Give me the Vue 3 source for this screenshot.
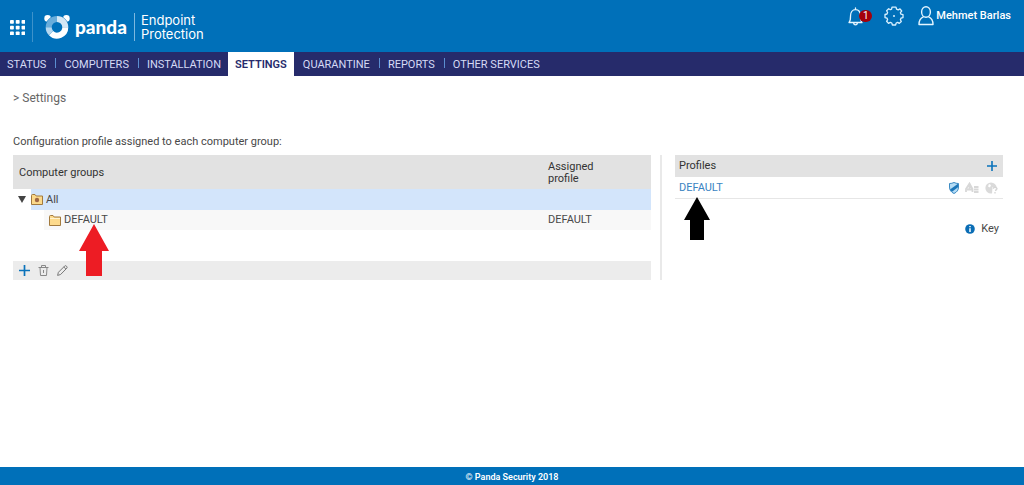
<script setup>
const tabs = [
  { label: 'STATUS' },
  { label: 'COMPUTERS', divided: true },
  { label: 'INSTALLATION', divided: true },
  { label: 'SETTINGS', active: true },
  { label: 'QUARANTINE' },
  { label: 'REPORTS', divided: true },
  { label: 'OTHER SERVICES', divided: true },
]
const dots = [0, 6, 12]
</script>

<template>
  <div class="page">
    <header class="top">
      <button class="plain apps" aria-label="Applications">
        <svg width="15" height="15" viewBox="0 0 15.6 15.6" fill="#fff">
          <template v-for="y in dots" :key="y">
            <rect v-for="x in dots" :key="x" :x="x" :y="y" width="4" height="4" rx="0.8" />
          </template>
        </svg>
      </button>
      <a class="brand" href="#" aria-label="Panda Endpoint Protection">
        <svg width="26" height="24" viewBox="0 0 26 24">
          <circle cx="3.6" cy="3.4" r="3.3" fill="#fff" />
          <circle cx="22.4" cy="3.4" r="3.3" fill="#fff" />
          <circle cx="13" cy="12.2" r="11.6" fill="#0070b9" />
          <g fill="none" stroke-width="6">
            <path d="M4.7 12.2A8.3 8.3 0 0 1 13 3.9" stroke="#69addb" />
            <path d="M13 3.9A8.3 8.3 0 0 1 21.3 12.2" stroke="#d4e8f6" />
            <path d="M21.3 12.2A8.3 8.3 0 0 1 7.1 18.1" stroke="#fff" />
            <path d="M7.1 18.1A8.3 8.3 0 0 1 4.700 12.2" stroke="#b4d7ef" />
          </g>
        </svg>
        <span class="name">panda</span>
        <span class="product">Endpoint<br />Protection</span>
      </a>
      <div class="tools">
        <button class="plain bell" aria-label="Notifications: 1">
          <svg width="16" height="19" viewBox="0 0 16 19" fill="none" stroke="#e4f5ff" stroke-width="1.3" stroke-linejoin="round" stroke-linecap="round">
            <path d="M1 15.500C2.600 14 2.500 12.500 2.500 9C2.500 5 4.500 2.600 7.500 2.600S12.500 5 12.500 9C12.500 12.500 12.500 14 14 15.500ZM5.500 15.800C6 18.500 9 18.500 9.500 15.800M7.500 2.500V1" />
          </svg>
          <span class="badge">1</span>
        </button>
        <button class="plain gear" aria-label="Preferences">
          <svg width="20" height="20" viewBox="0 0 20 20" fill="none" stroke="#d9f1ff" stroke-width="1.3" stroke-linejoin="round">
            <path d="M8 1.200H12L12.600 3.200L14.200 3.900L16 2.900L17.700 5L16.400 6.700L17 8.200L19 8.600V11.600L17 12.200L16.400 13.700L17.300 15.500L15.300 17.400L13.600 16.400L12.200 17L11.600 19H8.400L7.800 17L6.300 16.400L4.500 17.300L2.600 15.300L3.600 13.700L3 12.100L1 11.600V8.500L3 8L3.600 6.500L2.600 4.700L4.700 2.700L6.400 3.700L7.600 3.200Z" />
            <circle cx="10" cy="10" r="1" fill="#d9f1ff" stroke="none" />
          </svg>
        </button>
        <button class="plain user">
          <svg width="16" height="20" viewBox="0 0 16 20" fill="none" stroke="#e4f5ff" stroke-width="1.4" stroke-linejoin="round">
            <ellipse cx="8" cy="6" rx="4.400" ry="5.200" />
            <path d="M5.500 10.800C2.500 11.800 1 13.500 1 18.500H15C15 13.500 13.500 11.800 10.500 10.800" />
          </svg>
          <span>Mehmet Barlas</span>
        </button>
      </div>
    </header>

    <nav class="tabs">
      <a v-for="t in tabs" :key="t.label" href="#" :class="{ active: t.active, divided: t.divided }">{{ t.label }}</a>
    </nav>

    <main class="content">
      <p class="crumb">&gt; Settings</p>
      <p class="intro">Configuration profile assigned to each computer group:</p>
      <div class="panels">
        <section class="groups">
          <table>
            <thead>
              <tr>
                <th>Computer groups</th>
                <th class="assigned">Assigned<br />profile</th>
              </tr>
            </thead>
            <tbody>
              <tr class="root">
                <td>
                  <div class="node">
                    <button class="plain toggle" aria-label="Collapse All">
                      <svg width="8" height="7" viewBox="0 0 8 7"><path d="M0 0H8L4 7Z" fill="#444" /></svg>
                    </button>
                    <span class="label">
                      <svg width="12" height="11" viewBox="0 0 12 11">
                        <path d="M.5 10.500V1.500Q.5.5 1.500.5H4L5.200 2H11.500V10.500Z" fill="#fbd98b" stroke="#a27a3e" />
                        <circle cx="6" cy="6" r="2.200" fill="#a06845" />
                      </svg>
                      All
                    </span>
                  </div>
                </td>
                <td></td>
              </tr>
              <tr class="leaf">
                <td>
                  <div class="node child">
                    <svg width="12" height="11" viewBox="0 0 12 11">
                      <path d="M.5 10.500V1.500Q.5.5 1.500.5H4L5.200 2H11.500V10.500Z" fill="#fdda8c" stroke="#a27a3e" />
                      <path d="M1 3.500H11" stroke="#fff3cf" />
                    </svg>
                    <span class="target">DEFAULT
                      <svg class="arrow red" width="30" height="52" viewBox="0 0 30 52"><path d="M15 0L30 27H23V52H7V27H0Z" fill="#ed1c24" /></svg>
                    </span>
                  </div>
                </td>
                <td>DEFAULT</td>
              </tr>
            </tbody>
          </table>
          <div class="actions">
            <button class="plain" aria-label="Add group">
              <svg width="11" height="11" viewBox="0 0 11 11"><path d="M5.500 0V11M0 5.500H11" stroke="#0b73bb" stroke-width="1.700" /></svg>
            </button>
            <button class="plain" aria-label="Delete group">
              <svg width="11" height="11" viewBox="0 0 11 11" fill="none" stroke="#888"><path d="M.5 2.500H10.500M3.500 2.500V.5H7.500V2.500M2 2.500L2.500 10.500H8.500L9 2.500M5.500 5V8" /></svg>
            </button>
            <button class="plain" aria-label="Edit group">
              <svg width="11" height="11" viewBox="0 0 11 11" fill="none" stroke="#777"><path d="M.6 10.400L1.400 7.300L7.800.9Q8.600.3 9.500 1.200Q10.600 2.200 9.900 3.100L3.600 9.500ZM6.800 2L9 4.200" /></svg>
            </button>
          </div>
        </section>

        <section class="profiles">
          <div class="head">
            <h2>Profiles</h2>
            <button class="plain" aria-label="Add profile">
              <svg width="10" height="10" viewBox="0 0 10 10"><path d="M5 0V10M0 5H10" stroke="#0b73bb" stroke-width="1.600" /></svg>
            </button>
          </div>
          <div class="profile">
            <a class="target" href="#">DEFAULT
              <svg class="arrow black" width="26" height="43" viewBox="0 0 26 43"><path d="M13 0L26 23H20V43H6V23H0Z" fill="#000" /></svg>
            </a>
            <span class="states">
              <svg width="10" height="12" viewBox="0 0 10 12">
                <path d="M.5 1.500Q3 1.500 5 .5Q7 1.500 9.500 1.500V5Q9.500 9.500 5 11.500Q.5 9.500.5 5Z" fill="#b5dcf5" stroke="#3b8ac2" />
                <path d="M1 7.500L9 1.700V5.300L3 9.800Z" fill="#1b75b8" />
              </svg>
              <svg width="14" height="11" viewBox="0 0 14 11" fill="none" stroke="#d8d8d8" stroke-width="1.800">
                <path d="M1 10V7L4.500 1.500L7.500 7V10M2 7.500H7M4.500 3V7M9 5H13.500M9 7.500H13.500M9 10H13.500" />
              </svg>
              <svg width="13" height="12" viewBox="0 0 13 12">
                <circle cx="6" cy="6" r="5.600" fill="#dadada" />
                <path d="M4 2L6 3L5 5.500L3 4.500ZM7.500 5H13V12H7Z" fill="#fff" />
                <path d="M8 6.500Q10 4 12 6.500Q12 8 10 8.500M10 10V11.500" fill="none" stroke="#d5d5d5" stroke-width="1.300" />
              </svg>
            </span>
          </div>
          <a class="key" href="#">
            <svg width="10" height="10" viewBox="0 0 10 10"><circle cx="5" cy="5" r="4.800" fill="#0a6db5" /><path d="M5 2V3.300M5 4.200V8" stroke="#fff" stroke-width="1.500" /></svg>
            Key
          </a>
        </section>
      </div>
    </main>

    <footer>© Panda Security 2018</footer>
  </div>
</template>

<style>
body {
  margin: 0;
}
</style>

<style scoped>
.page {
  min-height: 100vh;
  display: flex;
  flex-direction: column;
  background: #fff;
  color: #484848;
  font: 11px/12px Roboto, "Liberation Sans", sans-serif;
}
svg {
  display: block;
  flex: none;
}
a {
  color: inherit;
  text-decoration: none;
}
.plain {
  display: flex;
  align-items: center;
  padding: 0;
  border: 0;
  background: none;
  color: inherit;
  font: inherit;
  cursor: pointer;
}
.top {
  display: flex;
  height: 52px;
  box-sizing: border-box;
  padding: 0 13px 0 10px;
  background: #0070b9;
  color: #fff;
}
.apps {
  height: 30px;
  margin-top: 12px;
  padding-right: 7px;
  border-right: 1px solid #3d92ca;
}
.brand {
  display: flex;
  align-items: center;
  height: 30px;
  margin: 12px 0 0 11px;
}
.name {
  margin-left: 5px;
  font: 900 19px/20px Lato, sans-serif;
}
.product {
  margin-left: 7px;
  padding-left: 6px;
  border-left: 1px solid #7db8df;
  font: 400 13px/14px Inter, sans-serif;
}
.tools {
  display: flex;
  align-items: center;
  height: 32px;
  margin-left: auto;
}
.bell {
  margin-right: 12px;
}
.badge {
  width: 13px;
  margin-left: -5px;
  border-radius: 6px;
  background: #a3000b;
  font-size: 10px;
  line-height: 12px;
  text-align: center;
}
.gear {
  margin-right: 14px;
}
.user {
  gap: 2px;
  font-weight: 500;
}
.tabs {
  display: flex;
  height: 24px;
  background: #262b6b;
  color: #d5daf5;
  line-height: 25px;
}
.tabs a {
  position: relative;
  padding: 0 7px;
}
.tabs .active {
  margin-right: 2px;
  background: #fff;
  color: #262b6b;
  font-weight: 600;
}
.tabs .divided {
  margin-left: 4px;
}
.tabs .divided::before {
  content: "";
  position: absolute;
  left: -2px;
  top: 6px;
  height: 10px;
  border-left: 1px solid #5b8ed0;
}
.content {
  flex: 1;
  padding: 16px 21px 16px 13px;
}
.crumb {
  margin: 0 0 31px;
  color: #666;
  font-size: 12px;
}
.intro {
  margin: 0 0 6px;
  line-height: 14px;
}
.panels {
  display: grid;
  grid-template-columns: 649fr 341fr;
}
.groups {
  padding-right: 9px;
  border-right: 2px solid #e9e9e9;
}
table {
  width: 100%;
  border-collapse: collapse;
}
th,
td {
  padding: 0 6px;
  font-weight: 400;
  text-align: left;
}
th {
  height: 32px;
  padding-top: 2px;
  background: #e2e2e2;
  color: #333;
}
.assigned {
  width: 97px;
}
.root {
  height: 21px;
}
.root td {
  background: #d3e5fb;
}
.root td:first-child {
  padding: 0;
  background: #fff;
}
.leaf {
  height: 20px;
  background: #f8f8f8;
}
.leaf td:first-child {
  background: linear-gradient(to right, #fff 31px, #f8f8f8 31px);
}
.node {
  display: flex;
  align-items: center;
}
.toggle {
  justify-content: center;
  width: 18px;
}
.label {
  flex: 1;
  display: flex;
  align-items: center;
  gap: 3px;
  height: 21px;
  background: #d3e5fb;
}
.child {
  gap: 3px;
  padding-left: 30px;
}
.target {
  position: relative;
}
.arrow {
  position: absolute;
}
.red {
  left: 15px;
  top: 10px;
}
.black {
  left: 5px;
  top: 15px;
}
.actions {
  display: flex;
  gap: 8px;
  height: 19px;
  margin-top: 31px;
  padding-left: 6px;
  background: #ececec;
}
.profiles {
  padding-left: 13px;
}
.head {
  display: flex;
  align-items: center;
  justify-content: space-between;
  height: 22px;
  padding: 0 6px 0 4px;
  background: #e2e2e2;
  color: #333;
}
h2 {
  margin: 0;
  font: inherit;
  line-height: 14px;
}
.profile {
  display: flex;
  align-items: center;
  justify-content: space-between;
  height: 21px;
  padding: 0 5px 0 4px;
  border-bottom: 1px solid #e6e6e6;
  color: #3a83c2;
}
.states {
  display: flex;
  align-items: center;
  gap: 6px;
}
.key {
  display: flex;
  align-items: center;
  justify-content: flex-end;
  gap: 6px;
  margin: 24px 4px 0 0;
}
footer {
  height: 18px;
  background: #0070b9;
  color: #fff;
  font-size: 9px;
  font-weight: 600;
  line-height: 21px;
  text-align: center;
}
</style>
